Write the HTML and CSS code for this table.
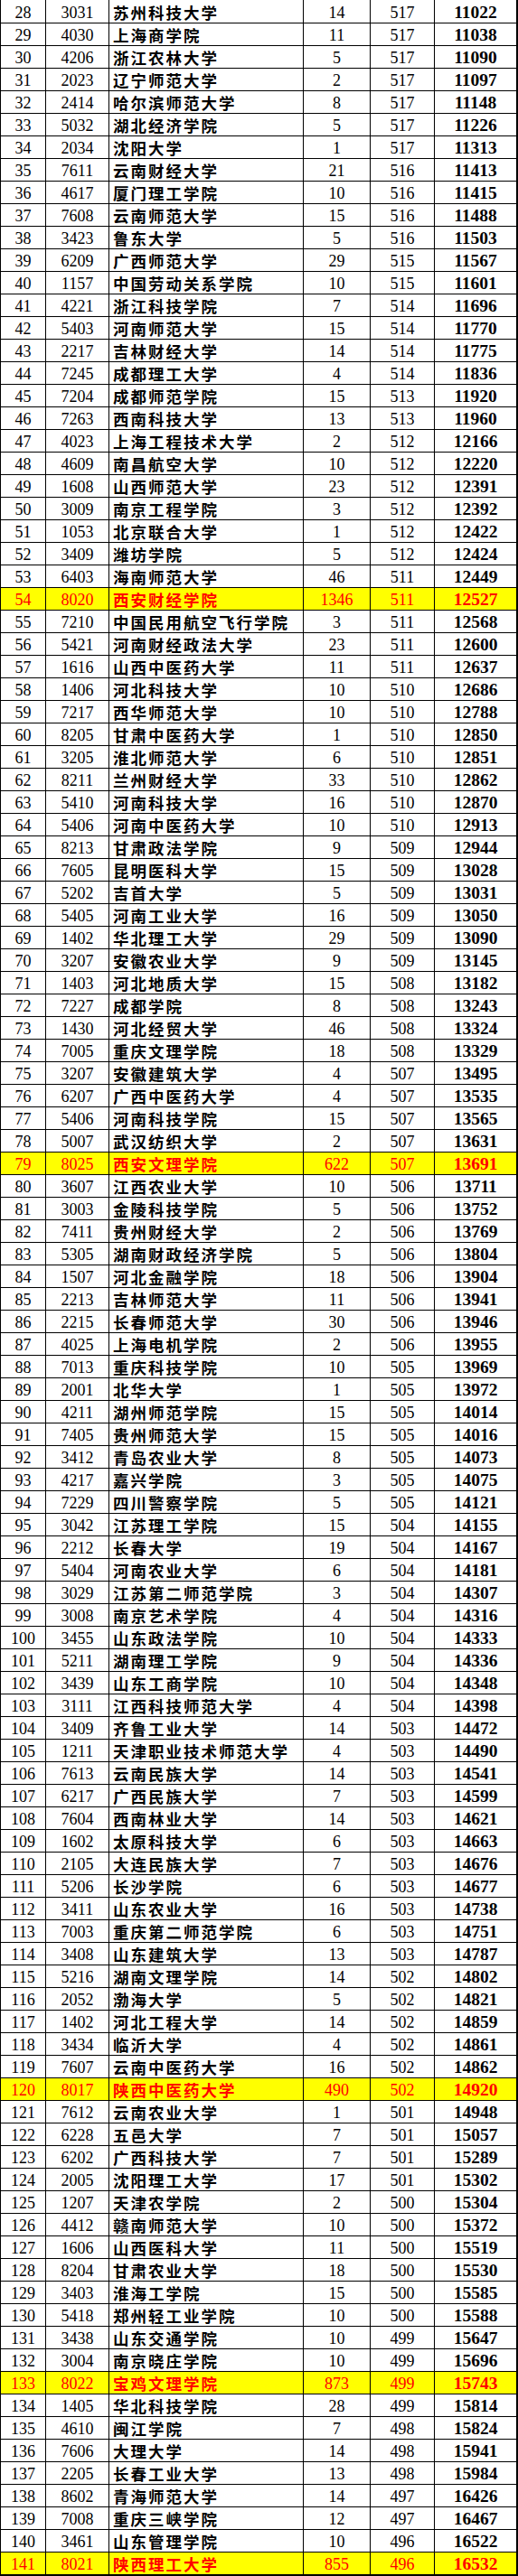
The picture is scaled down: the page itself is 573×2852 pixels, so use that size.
FILE: index.html
```html
<!DOCTYPE html>
<html lang="zh-CN">
<head>
<meta charset="utf-8">
<title>录取排名</title>
<link rel="stylesheet" href="styles.css">
</head>
<body>
<div class="sheet">
<div class="row"><span class="c">28</span><span class="c">3031</span><span class="c name">苏州科技大学</span><span class="c">14</span><span class="c">517</span><span class="c rank">11022</span></div>
<div class="row"><span class="c">29</span><span class="c">4030</span><span class="c name">上海商学院</span><span class="c">11</span><span class="c">517</span><span class="c rank">11038</span></div>
<div class="row"><span class="c">30</span><span class="c">4206</span><span class="c name">浙江农林大学</span><span class="c">5</span><span class="c">517</span><span class="c rank">11090</span></div>
<div class="row"><span class="c">31</span><span class="c">2023</span><span class="c name">辽宁师范大学</span><span class="c">2</span><span class="c">517</span><span class="c rank">11097</span></div>
<div class="row"><span class="c">32</span><span class="c">2414</span><span class="c name">哈尔滨师范大学</span><span class="c">8</span><span class="c">517</span><span class="c rank">11148</span></div>
<div class="row"><span class="c">33</span><span class="c">5032</span><span class="c name">湖北经济学院</span><span class="c">5</span><span class="c">517</span><span class="c rank">11226</span></div>
<div class="row"><span class="c">34</span><span class="c">2034</span><span class="c name">沈阳大学</span><span class="c">1</span><span class="c">517</span><span class="c rank">11313</span></div>
<div class="row"><span class="c">35</span><span class="c">7611</span><span class="c name">云南财经大学</span><span class="c">21</span><span class="c">516</span><span class="c rank">11413</span></div>
<div class="row"><span class="c">36</span><span class="c">4617</span><span class="c name">厦门理工学院</span><span class="c">10</span><span class="c">516</span><span class="c rank">11415</span></div>
<div class="row"><span class="c">37</span><span class="c">7608</span><span class="c name">云南师范大学</span><span class="c">15</span><span class="c">516</span><span class="c rank">11488</span></div>
<div class="row"><span class="c">38</span><span class="c">3423</span><span class="c name">鲁东大学</span><span class="c">5</span><span class="c">516</span><span class="c rank">11503</span></div>
<div class="row"><span class="c">39</span><span class="c">6209</span><span class="c name">广西师范大学</span><span class="c">29</span><span class="c">515</span><span class="c rank">11567</span></div>
<div class="row"><span class="c">40</span><span class="c">1157</span><span class="c name">中国劳动关系学院</span><span class="c">10</span><span class="c">515</span><span class="c rank">11601</span></div>
<div class="row"><span class="c">41</span><span class="c">4221</span><span class="c name">浙江科技学院</span><span class="c">7</span><span class="c">514</span><span class="c rank">11696</span></div>
<div class="row"><span class="c">42</span><span class="c">5403</span><span class="c name">河南师范大学</span><span class="c">15</span><span class="c">514</span><span class="c rank">11770</span></div>
<div class="row"><span class="c">43</span><span class="c">2217</span><span class="c name">吉林财经大学</span><span class="c">14</span><span class="c">514</span><span class="c rank">11775</span></div>
<div class="row"><span class="c">44</span><span class="c">7245</span><span class="c name">成都理工大学</span><span class="c">4</span><span class="c">514</span><span class="c rank">11836</span></div>
<div class="row"><span class="c">45</span><span class="c">7204</span><span class="c name">成都师范学院</span><span class="c">15</span><span class="c">513</span><span class="c rank">11920</span></div>
<div class="row"><span class="c">46</span><span class="c">7263</span><span class="c name">西南科技大学</span><span class="c">13</span><span class="c">513</span><span class="c rank">11960</span></div>
<div class="row"><span class="c">47</span><span class="c">4023</span><span class="c name">上海工程技术大学</span><span class="c">2</span><span class="c">512</span><span class="c rank">12166</span></div>
<div class="row"><span class="c">48</span><span class="c">4609</span><span class="c name">南昌航空大学</span><span class="c">10</span><span class="c">512</span><span class="c rank">12220</span></div>
<div class="row"><span class="c">49</span><span class="c">1608</span><span class="c name">山西师范大学</span><span class="c">23</span><span class="c">512</span><span class="c rank">12391</span></div>
<div class="row"><span class="c">50</span><span class="c">3009</span><span class="c name">南京工程学院</span><span class="c">3</span><span class="c">512</span><span class="c rank">12392</span></div>
<div class="row"><span class="c">51</span><span class="c">1053</span><span class="c name">北京联合大学</span><span class="c">1</span><span class="c">512</span><span class="c rank">12422</span></div>
<div class="row"><span class="c">52</span><span class="c">3409</span><span class="c name">潍坊学院</span><span class="c">5</span><span class="c">512</span><span class="c rank">12424</span></div>
<div class="row"><span class="c">53</span><span class="c">6403</span><span class="c name">海南师范大学</span><span class="c">46</span><span class="c">511</span><span class="c rank">12449</span></div>
<div class="row hl"><span class="c">54</span><span class="c">8020</span><span class="c name">西安财经学院</span><span class="c">1346</span><span class="c">511</span><span class="c rank">12527</span></div>
<div class="row"><span class="c">55</span><span class="c">7210</span><span class="c name">中国民用航空飞行学院</span><span class="c">3</span><span class="c">511</span><span class="c rank">12568</span></div>
<div class="row"><span class="c">56</span><span class="c">5421</span><span class="c name">河南财经政法大学</span><span class="c">23</span><span class="c">511</span><span class="c rank">12600</span></div>
<div class="row"><span class="c">57</span><span class="c">1616</span><span class="c name">山西中医药大学</span><span class="c">11</span><span class="c">511</span><span class="c rank">12637</span></div>
<div class="row"><span class="c">58</span><span class="c">1406</span><span class="c name">河北科技大学</span><span class="c">10</span><span class="c">510</span><span class="c rank">12686</span></div>
<div class="row"><span class="c">59</span><span class="c">7217</span><span class="c name">西华师范大学</span><span class="c">10</span><span class="c">510</span><span class="c rank">12788</span></div>
<div class="row"><span class="c">60</span><span class="c">8205</span><span class="c name">甘肃中医药大学</span><span class="c">1</span><span class="c">510</span><span class="c rank">12850</span></div>
<div class="row"><span class="c">61</span><span class="c">3205</span><span class="c name">淮北师范大学</span><span class="c">6</span><span class="c">510</span><span class="c rank">12851</span></div>
<div class="row"><span class="c">62</span><span class="c">8211</span><span class="c name">兰州财经大学</span><span class="c">33</span><span class="c">510</span><span class="c rank">12862</span></div>
<div class="row"><span class="c">63</span><span class="c">5410</span><span class="c name">河南科技大学</span><span class="c">16</span><span class="c">510</span><span class="c rank">12870</span></div>
<div class="row"><span class="c">64</span><span class="c">5406</span><span class="c name">河南中医药大学</span><span class="c">10</span><span class="c">510</span><span class="c rank">12913</span></div>
<div class="row"><span class="c">65</span><span class="c">8213</span><span class="c name">甘肃政法学院</span><span class="c">9</span><span class="c">509</span><span class="c rank">12944</span></div>
<div class="row"><span class="c">66</span><span class="c">7605</span><span class="c name">昆明医科大学</span><span class="c">15</span><span class="c">509</span><span class="c rank">13028</span></div>
<div class="row"><span class="c">67</span><span class="c">5202</span><span class="c name">吉首大学</span><span class="c">5</span><span class="c">509</span><span class="c rank">13031</span></div>
<div class="row"><span class="c">68</span><span class="c">5405</span><span class="c name">河南工业大学</span><span class="c">16</span><span class="c">509</span><span class="c rank">13050</span></div>
<div class="row"><span class="c">69</span><span class="c">1402</span><span class="c name">华北理工大学</span><span class="c">29</span><span class="c">509</span><span class="c rank">13090</span></div>
<div class="row"><span class="c">70</span><span class="c">3207</span><span class="c name">安徽农业大学</span><span class="c">9</span><span class="c">509</span><span class="c rank">13145</span></div>
<div class="row"><span class="c">71</span><span class="c">1403</span><span class="c name">河北地质大学</span><span class="c">15</span><span class="c">508</span><span class="c rank">13182</span></div>
<div class="row"><span class="c">72</span><span class="c">7227</span><span class="c name">成都学院</span><span class="c">8</span><span class="c">508</span><span class="c rank">13243</span></div>
<div class="row"><span class="c">73</span><span class="c">1430</span><span class="c name">河北经贸大学</span><span class="c">46</span><span class="c">508</span><span class="c rank">13324</span></div>
<div class="row"><span class="c">74</span><span class="c">7005</span><span class="c name">重庆文理学院</span><span class="c">18</span><span class="c">508</span><span class="c rank">13329</span></div>
<div class="row"><span class="c">75</span><span class="c">3207</span><span class="c name">安徽建筑大学</span><span class="c">4</span><span class="c">507</span><span class="c rank">13495</span></div>
<div class="row"><span class="c">76</span><span class="c">6207</span><span class="c name">广西中医药大学</span><span class="c">4</span><span class="c">507</span><span class="c rank">13535</span></div>
<div class="row"><span class="c">77</span><span class="c">5406</span><span class="c name">河南科技学院</span><span class="c">15</span><span class="c">507</span><span class="c rank">13565</span></div>
<div class="row"><span class="c">78</span><span class="c">5007</span><span class="c name">武汉纺织大学</span><span class="c">2</span><span class="c">507</span><span class="c rank">13631</span></div>
<div class="row hl"><span class="c">79</span><span class="c">8025</span><span class="c name">西安文理学院</span><span class="c">622</span><span class="c">507</span><span class="c rank">13691</span></div>
<div class="row"><span class="c">80</span><span class="c">3607</span><span class="c name">江西农业大学</span><span class="c">10</span><span class="c">506</span><span class="c rank">13711</span></div>
<div class="row"><span class="c">81</span><span class="c">3003</span><span class="c name">金陵科技学院</span><span class="c">5</span><span class="c">506</span><span class="c rank">13752</span></div>
<div class="row"><span class="c">82</span><span class="c">7411</span><span class="c name">贵州财经大学</span><span class="c">2</span><span class="c">506</span><span class="c rank">13769</span></div>
<div class="row"><span class="c">83</span><span class="c">5305</span><span class="c name">湖南财政经济学院</span><span class="c">5</span><span class="c">506</span><span class="c rank">13804</span></div>
<div class="row"><span class="c">84</span><span class="c">1507</span><span class="c name">河北金融学院</span><span class="c">18</span><span class="c">506</span><span class="c rank">13904</span></div>
<div class="row"><span class="c">85</span><span class="c">2213</span><span class="c name">吉林师范大学</span><span class="c">11</span><span class="c">506</span><span class="c rank">13941</span></div>
<div class="row"><span class="c">86</span><span class="c">2215</span><span class="c name">长春师范大学</span><span class="c">30</span><span class="c">506</span><span class="c rank">13946</span></div>
<div class="row"><span class="c">87</span><span class="c">4025</span><span class="c name">上海电机学院</span><span class="c">2</span><span class="c">506</span><span class="c rank">13955</span></div>
<div class="row"><span class="c">88</span><span class="c">7013</span><span class="c name">重庆科技学院</span><span class="c">10</span><span class="c">505</span><span class="c rank">13969</span></div>
<div class="row"><span class="c">89</span><span class="c">2001</span><span class="c name">北华大学</span><span class="c">1</span><span class="c">505</span><span class="c rank">13972</span></div>
<div class="row"><span class="c">90</span><span class="c">4211</span><span class="c name">湖州师范学院</span><span class="c">15</span><span class="c">505</span><span class="c rank">14014</span></div>
<div class="row"><span class="c">91</span><span class="c">7405</span><span class="c name">贵州师范大学</span><span class="c">15</span><span class="c">505</span><span class="c rank">14016</span></div>
<div class="row"><span class="c">92</span><span class="c">3412</span><span class="c name">青岛农业大学</span><span class="c">8</span><span class="c">505</span><span class="c rank">14073</span></div>
<div class="row"><span class="c">93</span><span class="c">4217</span><span class="c name">嘉兴学院</span><span class="c">3</span><span class="c">505</span><span class="c rank">14075</span></div>
<div class="row"><span class="c">94</span><span class="c">7229</span><span class="c name">四川警察学院</span><span class="c">5</span><span class="c">505</span><span class="c rank">14121</span></div>
<div class="row"><span class="c">95</span><span class="c">3042</span><span class="c name">江苏理工学院</span><span class="c">15</span><span class="c">504</span><span class="c rank">14155</span></div>
<div class="row"><span class="c">96</span><span class="c">2212</span><span class="c name">长春大学</span><span class="c">19</span><span class="c">504</span><span class="c rank">14167</span></div>
<div class="row"><span class="c">97</span><span class="c">5404</span><span class="c name">河南农业大学</span><span class="c">6</span><span class="c">504</span><span class="c rank">14181</span></div>
<div class="row"><span class="c">98</span><span class="c">3029</span><span class="c name">江苏第二师范学院</span><span class="c">3</span><span class="c">504</span><span class="c rank">14307</span></div>
<div class="row"><span class="c">99</span><span class="c">3008</span><span class="c name">南京艺术学院</span><span class="c">4</span><span class="c">504</span><span class="c rank">14316</span></div>
<div class="row"><span class="c">100</span><span class="c">3455</span><span class="c name">山东政法学院</span><span class="c">10</span><span class="c">504</span><span class="c rank">14333</span></div>
<div class="row"><span class="c">101</span><span class="c">5211</span><span class="c name">湖南理工学院</span><span class="c">9</span><span class="c">504</span><span class="c rank">14336</span></div>
<div class="row"><span class="c">102</span><span class="c">3439</span><span class="c name">山东工商学院</span><span class="c">10</span><span class="c">504</span><span class="c rank">14348</span></div>
<div class="row"><span class="c">103</span><span class="c">3111</span><span class="c name">江西科技师范大学</span><span class="c">4</span><span class="c">504</span><span class="c rank">14398</span></div>
<div class="row"><span class="c">104</span><span class="c">3409</span><span class="c name">齐鲁工业大学</span><span class="c">14</span><span class="c">503</span><span class="c rank">14472</span></div>
<div class="row"><span class="c">105</span><span class="c">1211</span><span class="c name">天津职业技术师范大学</span><span class="c">4</span><span class="c">503</span><span class="c rank">14490</span></div>
<div class="row"><span class="c">106</span><span class="c">7613</span><span class="c name">云南民族大学</span><span class="c">14</span><span class="c">503</span><span class="c rank">14541</span></div>
<div class="row"><span class="c">107</span><span class="c">6217</span><span class="c name">广西民族大学</span><span class="c">7</span><span class="c">503</span><span class="c rank">14599</span></div>
<div class="row"><span class="c">108</span><span class="c">7604</span><span class="c name">西南林业大学</span><span class="c">14</span><span class="c">503</span><span class="c rank">14621</span></div>
<div class="row"><span class="c">109</span><span class="c">1602</span><span class="c name">太原科技大学</span><span class="c">6</span><span class="c">503</span><span class="c rank">14663</span></div>
<div class="row"><span class="c">110</span><span class="c">2105</span><span class="c name">大连民族大学</span><span class="c">7</span><span class="c">503</span><span class="c rank">14676</span></div>
<div class="row"><span class="c">111</span><span class="c">5206</span><span class="c name">长沙学院</span><span class="c">6</span><span class="c">503</span><span class="c rank">14677</span></div>
<div class="row"><span class="c">112</span><span class="c">3411</span><span class="c name">山东农业大学</span><span class="c">16</span><span class="c">503</span><span class="c rank">14738</span></div>
<div class="row"><span class="c">113</span><span class="c">7003</span><span class="c name">重庆第二师范学院</span><span class="c">6</span><span class="c">503</span><span class="c rank">14751</span></div>
<div class="row"><span class="c">114</span><span class="c">3408</span><span class="c name">山东建筑大学</span><span class="c">13</span><span class="c">503</span><span class="c rank">14787</span></div>
<div class="row"><span class="c">115</span><span class="c">5216</span><span class="c name">湖南文理学院</span><span class="c">14</span><span class="c">502</span><span class="c rank">14802</span></div>
<div class="row"><span class="c">116</span><span class="c">2052</span><span class="c name">渤海大学</span><span class="c">5</span><span class="c">502</span><span class="c rank">14821</span></div>
<div class="row"><span class="c">117</span><span class="c">1402</span><span class="c name">河北工程大学</span><span class="c">14</span><span class="c">502</span><span class="c rank">14859</span></div>
<div class="row"><span class="c">118</span><span class="c">3434</span><span class="c name">临沂大学</span><span class="c">4</span><span class="c">502</span><span class="c rank">14861</span></div>
<div class="row"><span class="c">119</span><span class="c">7607</span><span class="c name">云南中医药大学</span><span class="c">16</span><span class="c">502</span><span class="c rank">14862</span></div>
<div class="row hl"><span class="c">120</span><span class="c">8017</span><span class="c name">陕西中医药大学</span><span class="c">490</span><span class="c">502</span><span class="c rank">14920</span></div>
<div class="row"><span class="c">121</span><span class="c">7612</span><span class="c name">云南农业大学</span><span class="c">1</span><span class="c">501</span><span class="c rank">14948</span></div>
<div class="row"><span class="c">122</span><span class="c">6228</span><span class="c name">五邑大学</span><span class="c">7</span><span class="c">501</span><span class="c rank">15057</span></div>
<div class="row"><span class="c">123</span><span class="c">6202</span><span class="c name">广西科技大学</span><span class="c">7</span><span class="c">501</span><span class="c rank">15289</span></div>
<div class="row"><span class="c">124</span><span class="c">2005</span><span class="c name">沈阳理工大学</span><span class="c">17</span><span class="c">501</span><span class="c rank">15302</span></div>
<div class="row"><span class="c">125</span><span class="c">1207</span><span class="c name">天津农学院</span><span class="c">2</span><span class="c">500</span><span class="c rank">15304</span></div>
<div class="row"><span class="c">126</span><span class="c">4412</span><span class="c name">赣南师范大学</span><span class="c">10</span><span class="c">500</span><span class="c rank">15372</span></div>
<div class="row"><span class="c">127</span><span class="c">1606</span><span class="c name">山西医科大学</span><span class="c">11</span><span class="c">500</span><span class="c rank">15519</span></div>
<div class="row"><span class="c">128</span><span class="c">8204</span><span class="c name">甘肃农业大学</span><span class="c">18</span><span class="c">500</span><span class="c rank">15530</span></div>
<div class="row"><span class="c">129</span><span class="c">3403</span><span class="c name">淮海工学院</span><span class="c">15</span><span class="c">500</span><span class="c rank">15585</span></div>
<div class="row"><span class="c">130</span><span class="c">5418</span><span class="c name">郑州轻工业学院</span><span class="c">10</span><span class="c">500</span><span class="c rank">15588</span></div>
<div class="row"><span class="c">131</span><span class="c">3438</span><span class="c name">山东交通学院</span><span class="c">10</span><span class="c">499</span><span class="c rank">15647</span></div>
<div class="row"><span class="c">132</span><span class="c">3004</span><span class="c name">南京晓庄学院</span><span class="c">10</span><span class="c">499</span><span class="c rank">15696</span></div>
<div class="row hl"><span class="c">133</span><span class="c">8022</span><span class="c name">宝鸡文理学院</span><span class="c">873</span><span class="c">499</span><span class="c rank">15743</span></div>
<div class="row"><span class="c">134</span><span class="c">1405</span><span class="c name">华北科技学院</span><span class="c">28</span><span class="c">499</span><span class="c rank">15814</span></div>
<div class="row"><span class="c">135</span><span class="c">4610</span><span class="c name">闽江学院</span><span class="c">7</span><span class="c">498</span><span class="c rank">15824</span></div>
<div class="row"><span class="c">136</span><span class="c">7606</span><span class="c name">大理大学</span><span class="c">14</span><span class="c">498</span><span class="c rank">15941</span></div>
<div class="row"><span class="c">137</span><span class="c">2205</span><span class="c name">长春工业大学</span><span class="c">13</span><span class="c">498</span><span class="c rank">15984</span></div>
<div class="row"><span class="c">138</span><span class="c">8602</span><span class="c name">青海师范大学</span><span class="c">14</span><span class="c">497</span><span class="c rank">16426</span></div>
<div class="row"><span class="c">139</span><span class="c">7008</span><span class="c name">重庆三峡学院</span><span class="c">12</span><span class="c">497</span><span class="c rank">16467</span></div>
<div class="row"><span class="c">140</span><span class="c">3461</span><span class="c name">山东管理学院</span><span class="c">10</span><span class="c">496</span><span class="c rank">16522</span></div>
<div class="row hl"><span class="c">141</span><span class="c">8021</span><span class="c name">陕西理工大学</span><span class="c">855</span><span class="c">496</span><span class="c rank">16532</span></div>
</div>
</body>
</html>
```
FILE: styles.css
```css
html, body {
  margin: 0;
  padding: 0;
  background: #ffffff;
}

.sheet {
  width: 573px;
  box-sizing: border-box;
  border-left: 1px solid #000;
  border-right: 2px solid #000;
  border-bottom: 2px solid #000;
  font-family: "Liberation Serif", "Times New Roman", serif;
  color: #000;
}

.row {
  display: grid;
  grid-template-columns: 50px 70px 215px 74px 71px 90px;
  height: 25px;
  box-sizing: border-box;
  border-top: 1px solid #000;
}

.row:first-child {
  border-top: 0;
}

.c {
  display: flex;
  align-items: center;
  justify-content: center;
  box-sizing: border-box;
  border-right: 1px solid #000;
  padding-top: 2px;
  font-size: 18px;
  line-height: 1;
  white-space: nowrap;
  overflow: hidden;
}

.c:last-child {
  border-right: 0;
}

.name {
  justify-content: flex-start;
  padding-left: 4px;
  font-family: "Noto Sans CJK SC", "Noto Sans", sans-serif;
  font-weight: 700;
  font-size: 17.5px;
  letter-spacing: 2px;
}

.rank {
  font-weight: 700;
  font-size: 19.5px;
}

.hl {
  background: #ffff00;
  color: #ff0000;
}
```
